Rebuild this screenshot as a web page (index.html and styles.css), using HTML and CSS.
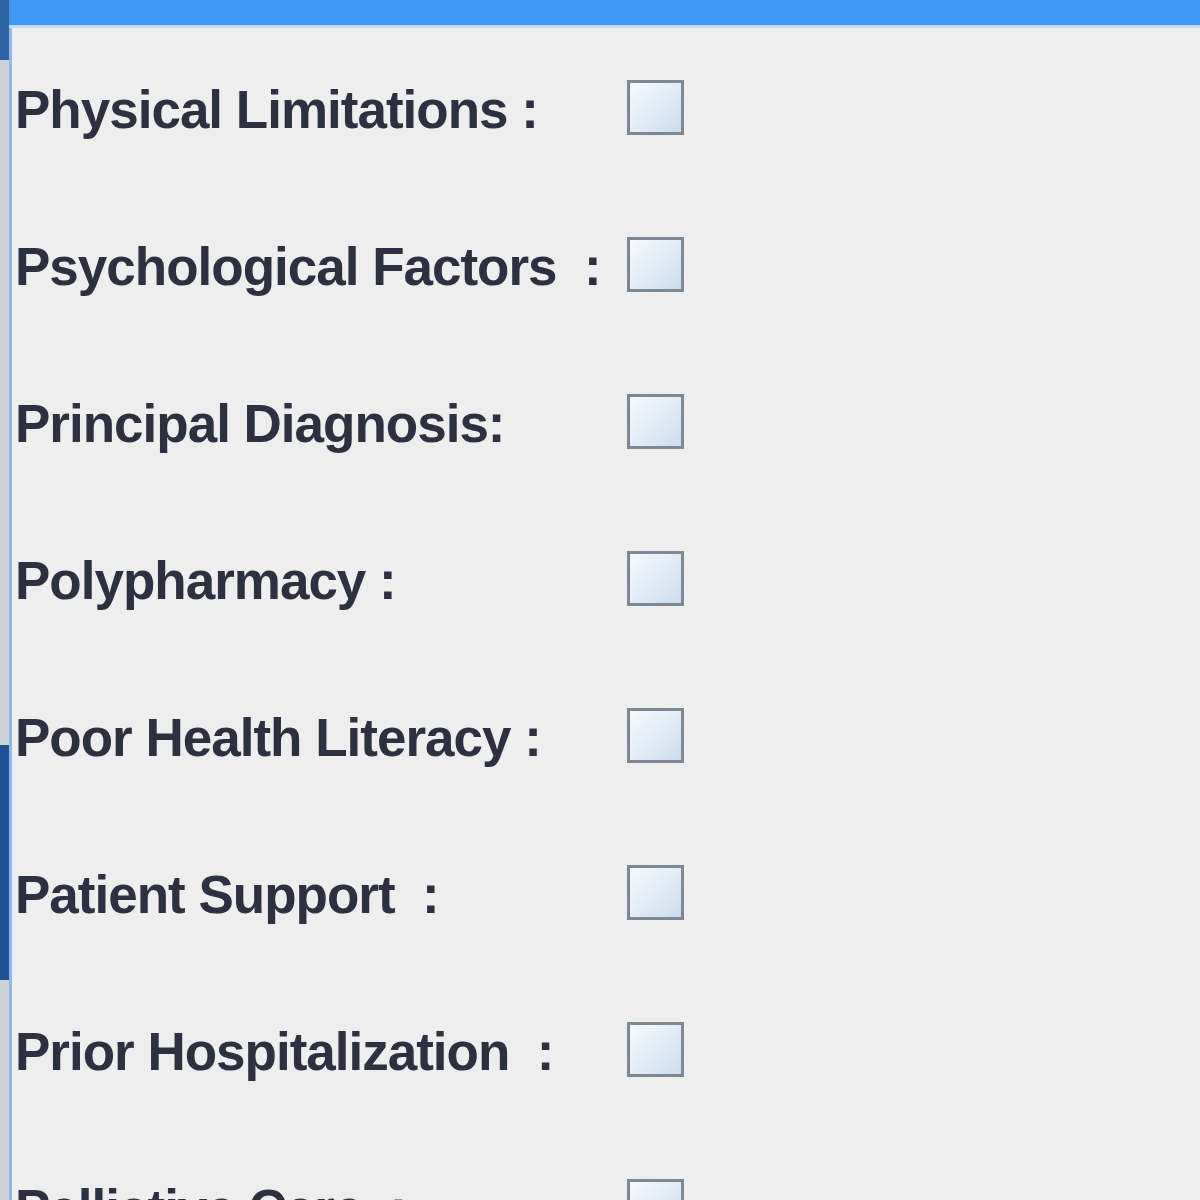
FILE: index.html
```html
<!DOCTYPE html>
<html>
<head>
<meta charset="utf-8">
<link rel="stylesheet" href="styles.css">
</head>
<body>
<div class="window">
  <div class="edge"></div>
  <div class="main">
    <div class="titlebar"></div>
    <div class="panel">
      <div class="row"><span class="label">Physical Limitations :</span><span class="check"></span></div>
      <div class="row"><span class="label">Psychological Factors&nbsp; :</span><span class="check"></span></div>
      <div class="row"><span class="label">Principal Diagnosis:</span><span class="check"></span></div>
      <div class="row"><span class="label">Polypharmacy :</span><span class="check"></span></div>
      <div class="row"><span class="label">Poor Health Literacy :</span><span class="check"></span></div>
      <div class="row"><span class="label">Patient Support&nbsp; :</span><span class="check"></span></div>
      <div class="row"><span class="label">Prior Hospitalization&nbsp; :</span><span class="check"></span></div>
      <div class="row"><span class="label">Palliative Care&nbsp; :</span><span class="check"></span></div>
    </div>
  </div>
</div>
</body>
</html>
```

FILE: styles.css
```css
html, body {
  margin: 0;
  padding: 0;
  background: #eeeeee;
}
.window {
  display: flex;
  width: 1200px;
  height: 1200px;
  overflow: hidden;
}
.edge {
  width: 9px;
  flex: none;
  background: linear-gradient(to bottom,
    #2d62a3 0, #2d62a3 60px,
    #cdd2d6 60px, #cdd2d6 745px,
    #1f4f95 745px, #1f4f95 980px,
    #cdd2d6 980px);
}
.main {
  flex: 1;
  display: flex;
  flex-direction: column;
}
.titlebar {
  height: 25px;
  flex: none;
  background: #3f97f4;
  border-bottom: 3px solid #c3dcf4;
}
.panel {
  flex: 1;
  border-left: 3px solid #8fb8e3;
  background: #eeeeee;
  display: flex;
  flex-direction: column;
  padding-top: 1px;
}
.row {
  height: 157px;
  flex: none;
  display: flex;
  align-items: center;
}
.label {
  width: 612px;
  flex: none;
  padding-left: 3px;
  padding-top: 3px;
  font-family: "Liberation Sans", Arial, sans-serif;
  font-weight: bold;
  font-size: 53px;
  line-height: 53px;
  letter-spacing: -1px;
  color: #2c3040;
  white-space: pre;
}
.check {
  width: 51px;
  height: 49px;
  border: 3px solid #7e8894;
  background: linear-gradient(135deg, #f6f9fd 0%, #e3ecf6 50%, #cbdcef 100%);
}
```
